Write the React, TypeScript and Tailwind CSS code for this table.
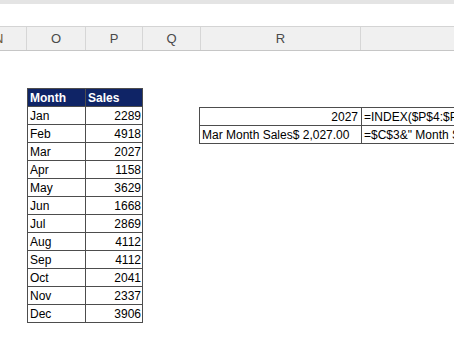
import React from "react";

const rows: [string, number][] = [
  ["Jan", 2289],
  ["Feb", 4918],
  ["Mar", 2027],
  ["Apr", 1158],
  ["May", 3629],
  ["Jun", 1668],
  ["Jul", 2869],
  ["Aug", 4112],
  ["Sep", 4112],
  ["Oct", 2041],
  ["Nov", 2337],
  ["Dec", 3906],
];

export default function App() {
  return (
    <div className="w-[454px] h-[341px] overflow-hidden bg-white font-['Liberation_Sans',Arial,sans-serif] text-[12px] text-black">
      <div className="h-[4px] bg-[#e4e4e4]" />
      <div className="h-[23px] bg-white border-b border-[#d4d4d4]" />
      <div className="flex h-[24px] bg-[#f0f0f0] border-b border-[#c6c6c6] text-[#4a4a4a] text-[13px]">
        <div className="w-[27px] shrink-0 border-r border-[#d6d6d6] flex items-center justify-start overflow-hidden">
          <span className="-ml-[6px] text-[#6b5a3a]">N</span>
        </div>
        <div className="w-[59px] shrink-0 border-r border-[#d6d6d6] flex items-center justify-center">O</div>
        <div className="w-[57px] shrink-0 border-r border-[#d6d6d6] flex items-center justify-center">P</div>
        <div className="w-[58px] shrink-0 border-r border-[#d6d6d6] flex items-center justify-center">Q</div>
        <div className="w-[160px] shrink-0 border-r border-[#d6d6d6] flex items-center justify-center">R</div>
        <div className="flex-1" />
      </div>

      <div className="flex items-start pl-[27px]">
        <div className="mt-[37px] border-l border-t border-[#4d4d4d] grid grid-cols-[58px_57px]">
          <div className="h-[18px] bg-[#0f2466] border-r border-b border-[#4d4d4d] pl-[2px] flex items-center font-bold text-white">
            Month
          </div>
          <div className="h-[18px] bg-[#0f2466] border-r border-b border-[#4d4d4d] pl-[2px] flex items-center font-bold text-white">
            Sales
          </div>
          {rows.map(([m, v]) => (
            <React.Fragment key={m}>
              <div className="h-[18px] border-r border-b border-[#4d4d4d] pl-[2px] flex items-center">{m}</div>
              <div className="h-[18px] border-r border-b border-[#4d4d4d] pr-[1px] flex items-center justify-end">{v}</div>
            </React.Fragment>
          ))}
        </div>

        <div className="ml-[56px] mt-[56px] border-l border-t border-[#4d4d4d] grid grid-cols-[162px_200px]">
          <div className="h-[18px] border-r border-b border-[#4d4d4d] pr-[3px] flex items-center justify-end">2027</div>
          <div className="h-[18px] border-b border-[#4d4d4d] pl-[2px] flex items-center whitespace-nowrap overflow-hidden">
            =INDEX($P$4:$P$15,MATCH($C$3,$O$4:$O$15,0))
          </div>
          <div className="h-[18px] border-r border-b border-[#4d4d4d] pl-[2px] flex items-center whitespace-nowrap overflow-hidden">
            Mar Month Sales$ 2,027.00
          </div>
          <div className="h-[18px] border-b border-[#4d4d4d] pl-[2px] flex items-center whitespace-nowrap overflow-hidden">
            =$C$3&amp;" Month Sales"&amp;TEXT(R4,"$ #,##0.00")
          </div>
        </div>
      </div>
    </div>
  );
}
